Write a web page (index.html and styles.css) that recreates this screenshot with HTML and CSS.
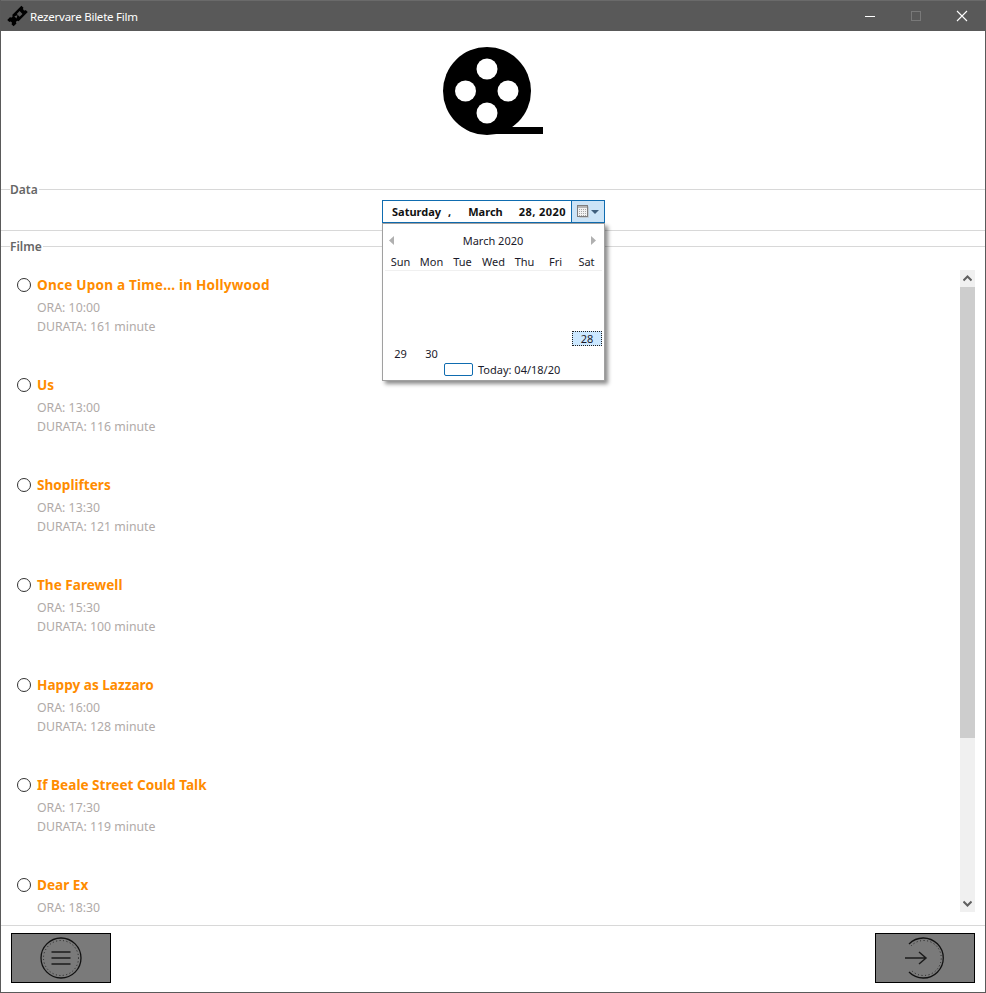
FILE: index.html
```html
<!DOCTYPE html>
<html lang="ro">
<head>
<meta charset="utf-8">
<title>Rezervare Bilete Film</title>
<link rel="stylesheet" href="styles.css">
</head>
<body>
<div class="window">
  <header class="titlebar">
    <svg class="app-icon" width="17" height="18" viewBox="0 0 17 18">
      <g transform="rotate(-45 8.500 9)">
        <path fill="#000" d="M-1.500 4.500h4a1.500 1.500 0 0 0 3 0h13v3a1.500 1.500 0 0 0 0 3v3h-13a1.500 1.500 0 0 0-3 0h-4v-3a1.500 1.500 0 0 0 0-3z"/>
        <path d="M6 7l3 1.500-3 1.500M9.500 7h4v4h-4z" fill="#595959"/>
      </g>
    </svg>
    <span class="app-title">Rezervare Bilete Film</span>
    <div class="win-controls">
      <svg class="win-btn" width="46" height="30" viewBox="0 0 46 30"><path d="M17 15.500h10" stroke="#fff" stroke-width="1"/></svg>
      <svg class="win-btn" width="46" height="30" viewBox="0 0 46 30"><rect x="17.500" y="10.500" width="9" height="9" fill="none" stroke="#797979"/></svg>
      <svg class="win-btn" width="46" height="30" viewBox="0 0 46 30"><path d="M17 10l10 10M27 10L17 20" stroke="#fff" stroke-width="1.100"/></svg>
    </div>
  </header>

  <div class="logo-area">
    <svg width="100" height="88" viewBox="0 0 100 88">
      <circle cx="44" cy="44" r="44" fill="#000"/>
      <rect x="44" y="80" width="56" height="7" fill="#000"/>
      <circle cx="44" cy="22" r="10.500" fill="#fff"/>
      <circle cx="22.500" cy="44" r="10.500" fill="#fff"/>
      <circle cx="65" cy="44" r="10.500" fill="#fff"/>
      <circle cx="44" cy="66" r="10.500" fill="#fff"/>
    </svg>
  </div>

  <section class="group group-data">
    <div class="legend"><span class="legend-dash"></span><span class="legend-text">Data</span><span class="legend-line"></span></div>
    <div class="date-row">
      <div class="datepicker">
        <div class="date-text">
          <span class="d-day">Saturday</span><span class="d-comma">,</span><span class="d-month">March</span><span class="d-rest">28, 2020</span>
        </div>
        <div class="date-btn">
          <svg width="24" height="20" viewBox="0 0 24 20">
            <path d="M3.500 15.500h9v-11" fill="none" stroke="#c2ccd4"/>
            <rect x="1.500" y="3.500" width="10" height="11" fill="#f2f2f2" stroke="#7d7d7d"/>
            <rect x="2" y="4" width="9" height="2" fill="#b5b5b5"/>
            <path d="M3 7.500h7M3 9.500h7M3 11.500h7M3 13.500h7" stroke="#a8a8a8" stroke-width="1" stroke-dasharray="1 1"/>
            <path d="M15 8h8l-4 4z" fill="#3f5f7d"/>
          </svg>
        </div>
      </div>
    </div>
    <div class="calendar">
      <div class="cal-head">
        <svg width="5" height="9" viewBox="0 0 5 9"><path d="M5 0v9L0 4.500z" fill="#b0b0b0"/></svg>
        <span>March 2020</span>
        <svg width="5" height="9" viewBox="0 0 5 9"><path d="M0 0v9l5-4.500z" fill="#b0b0b0"/></svg>
      </div>
      <div class="cal-days"><span>Sun</span><span>Mon</span><span>Tue</span><span>Wed</span><span>Thu</span><span>Fri</span><span>Sat</span></div>
      <div class="cal-blank"></div>
      <div class="cal-days cal-row"><span></span><span></span><span></span><span></span><span></span><span></span><span class="cal-sel">28</span></div>
      <div class="cal-days cal-row"><span>29</span><span>30</span><span></span><span></span><span></span><span></span><span></span></div>
      <div class="cal-foot"><span class="today-box"></span><span>Today: 04/18/20</span></div>
    </div>
  </section>

  <section class="group group-filme">
    <div class="legend"><span class="legend-dash"></span><span class="legend-text">Filme</span><span class="legend-line"></span></div>
    <div class="list-wrap">
      <ul class="movies">
        <li class="movie"><span class="radio"></span><div><div class="m-title m-title-long">Once Upon a Time... in Hollywood</div><div class="m-info">ORA: 10:00</div><div class="m-info">DURATA: 161 minute</div></div></li>
        <li class="movie"><span class="radio"></span><div><div class="m-title">Us</div><div class="m-info">ORA: 13:00</div><div class="m-info">DURATA: 116 minute</div></div></li>
        <li class="movie"><span class="radio"></span><div><div class="m-title">Shoplifters</div><div class="m-info">ORA: 13:30</div><div class="m-info">DURATA: 121 minute</div></div></li>
        <li class="movie"><span class="radio"></span><div><div class="m-title">The Farewell</div><div class="m-info">ORA: 15:30</div><div class="m-info">DURATA: 100 minute</div></div></li>
        <li class="movie"><span class="radio"></span><div><div class="m-title">Happy as Lazzaro</div><div class="m-info">ORA: 16:00</div><div class="m-info">DURATA: 128 minute</div></div></li>
        <li class="movie"><span class="radio"></span><div><div class="m-title">If Beale Street Could Talk</div><div class="m-info">ORA: 17:30</div><div class="m-info">DURATA: 119 minute</div></div></li>
        <li class="movie movie-last"><span class="radio"></span><div><div class="m-title">Dear Ex</div><div class="m-info">ORA: 18:30</div></div></li>
      </ul>
      <div class="scrollbar">
        <div class="sb-btn"><svg width="9" height="7" viewBox="0 0 9 7"><path d="M.5 5.500l4-4 4 4" fill="none" stroke="#606060" stroke-width="2"/></svg></div>
        <div class="sb-thumb"></div>
        <div class="sb-rest"></div>
        <div class="sb-btn"><svg width="9" height="7" viewBox="0 0 9 7"><path d="M.5 1.500l4 4 4-4" fill="none" stroke="#606060" stroke-width="2"/></svg></div>
      </div>
    </div>
  </section>

  <footer class="footer">
    <div class="nav-btn">
      <svg width="42" height="42" viewBox="0 0 42 42">
        <circle cx="21" cy="21" r="20" fill="none" stroke="#111" stroke-width="1.300"/>
        <circle cx="21" cy="21" r="17.500" fill="none" stroke="#222" stroke-width="1" stroke-dasharray="1 2.500"/>
        <path d="M11.500 15h19M11.500 21h19M11.500 27h19" stroke="#1c1c1c" stroke-width="1.500"/>
      </svg>
    </div>
    <div class="nav-btn">
      <svg width="54" height="42" viewBox="0 0 54 42">
        <path d="M11 7A20 20 0 1 1 11 35" fill="none" stroke="#111" stroke-width="1.300"/>
        <path d="M13 9A17.500 17.500 0 1 1 13 33" fill="none" stroke="#222" stroke-width="1" stroke-dasharray="1 2.500"/>
        <path d="M7 21h21M21 15l7 6-7 6" fill="none" stroke="#1c1c1c" stroke-width="1.500"/>
      </svg>
    </div>
  </footer>
</div>
</body>
</html>
```
FILE: styles.css
```css
* { box-sizing: border-box; }
html, body { margin: 0; padding: 0; background: #fff; }
body { font-family: "Noto Sans", "Open Sans", sans-serif; }
.window {
  width: 986px; height: 993px; display: flex; flex-direction: column;
  border: 1px solid #5a5a5a; border-top: 0; overflow: hidden; background: #fff;
}
.titlebar {
  height: 31px; margin: 0 -1px; flex: none; background: #595959; color: #fff;
  display: flex; align-items: center; padding-left: 9px;
  border-top: 1px solid #6a6a6a;
}
.app-icon { flex: none; overflow: visible; }
.app-title { margin-left: 4px; font: 11.500px "Noto Sans", sans-serif; letter-spacing: -.23px; }
.win-controls { margin-left: auto; display: flex; }
.win-btn { display: block; }
.logo-area { height: 158px; flex: none; padding-top: 16px; display: flex; justify-content: center; }
.logo-area svg { display: block; }
.group { position: relative; flex: none; }
.legend { display: flex; align-items: center; height: 0; font-size: 12px; font-weight: 600; color: #666; }
.legend-dash { width: 9px; border-top: 1px solid #d8d8d8; }
.legend-text { padding: 0 1px 0 0; }
.legend-line { flex: 1; border-top: 1px solid #d8d8d8; }
.group-data { height: 42px; border-bottom: 1px solid #d8d8d8; }
.date-row { display: flex; padding: 11px 0 0 381px; }
.datepicker { width: 223px; height: 23px; display: flex; border: 1px solid #0f6cb0; background: #fff; }
.date-text { flex: 1; font-size: 11px; font-weight: 700; color: #111; display: flex; align-items: center; padding-left: 9px; }
.d-comma { margin-left: 7px; }
.d-month { margin-left: 17px; }
.d-rest { margin-left: 16px; letter-spacing: .45px; }
.date-btn { width: 33px; flex: none; background: #cce4f7; border-left: 1px solid #0f6cb0; display: flex; align-items: center; justify-content: center; }
.calendar {
  position: absolute; left: 381px; top: 34px; width: 223px; height: 158px; z-index: 5;
  background: #fff; border: 1px solid #a0a0a0; box-shadow: 3px 3px 4px rgba(0,0,0,.45);
  font-size: 11px; color: #1a1a2a; padding: 0 2px;
}
.cal-head { display: flex; justify-content: space-between; align-items: center; height: 27px; padding: 5px 6px 0 4px; }
.cal-head span { margin-left: 1px; }
.cal-days { display: grid; grid-template-columns: repeat(7, 31px); height: 20px; border-bottom: 1px solid #f0f0f0; align-items: center; text-align: center; padding-top: 2px; }
.cal-blank { height: 60px; }
.cal-row { border-bottom: 0; height: 15px; padding-top: 0; }
.cal-sel { background: #cce8ff; border: 1px dotted #222; height: 15px; line-height: 13px; width: 30px; margin-left: 1px; }
.cal-foot { display: flex; align-items: center; gap: 5px; height: 16px; padding-left: 59px; }
.today-box { width: 29px; height: 13px; border: 1px solid #0f6cb0; border-radius: 2px; flex: none; }
.group-filme { margin-top: 15px; flex: 1; min-height: 0; border-bottom: 1px solid #d8d8d8; display: flex; flex-direction: column; }
.list-wrap { flex: 1; min-height: 0; display: flex; padding: 24px 10px 13px 0; }
.movies { flex: 1; list-style: none; margin: 0; padding: 0 0 0 16px; min-width: 0; }
.movie { height: 100px; display: flex; gap: 6px; padding-top: 7px; }
.movie-last { height: 37px; }
.radio { width: 14px; height: 14px; border: 1px solid #333; border-radius: 50%; flex: none; margin-top: 1px; }
.m-title { font-size: 13.600px; font-weight: 700; color: #ff8c00; line-height: 16px; }
.m-title-long { letter-spacing: .2px; }
.m-info { font-size: 12.300px; color: #b0aaa8; line-height: 19px; }
.m-title + .m-info { margin-top: 5px; }
.scrollbar { width: 15px; flex: none; display: flex; flex-direction: column; background: #f0f0f0; }
.sb-btn { height: 17px; flex: none; display: flex; align-items: center; justify-content: center; }
.sb-thumb { height: 451px; flex: none; background: #cdcdcd; }
.sb-rest { flex: 1; }
.footer { flex: none; height: 66px; display: flex; justify-content: space-between; align-items: flex-start; padding: 7px 10px 0 10px; }
.nav-btn { width: 100px; height: 50px; background: #7a7a7a; border: 1px solid #000; display: flex; align-items: center; justify-content: center; }
```
